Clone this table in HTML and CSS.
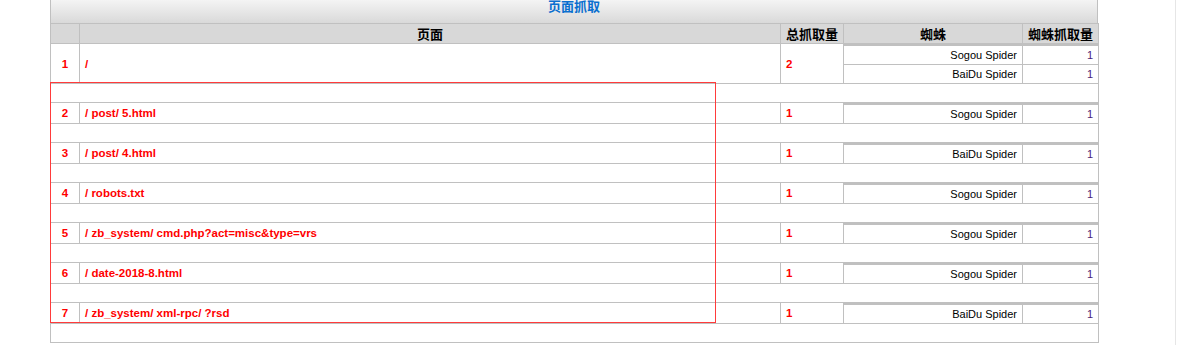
FILE: index.html
```html
<!DOCTYPE html>
<html lang="zh-CN">
<head>
  <meta charset="UTF-8">
  <title>页面抓取</title>
  <link rel="stylesheet" href="styles.css">
</head>
<body>
  <div class="page">
    <div class="panel">
      <div class="panel-title">页面抓取</div>
      <table class="crawl">
        <colgroup>
          <col class="c-no">
          <col class="c-url">
          <col class="c-total">
          <col class="c-spider">
          <col class="c-count">
        </colgroup>
        <thead>
          <tr>
            <th></th>
            <th>页面</th>
            <th>总抓取量</th>
            <th>蜘蛛</th>
            <th>蜘蛛抓取量</th>
          </tr>
        </thead>
        <tbody>
          <tr class="first">
            <td class="no" rowspan="2">1</td>
            <td class="url" rowspan="2">/</td>
            <td class="total" rowspan="2">2</td>
            <td class="spider">Sogou Spider</td>
            <td class="count"><a href="#">1</a></td>
          </tr>
          <tr class="sub">
            <td class="spider">BaiDu Spider</td>
            <td class="count"><a href="#">1</a></td>
          </tr>
          <tr class="gap"><td colspan="5"></td></tr>

          <tr class="first">
            <td class="no">2</td>
            <td class="url">/ post/ 5.html</td>
            <td class="total">1</td>
            <td class="spider">Sogou Spider</td>
            <td class="count"><a href="#">1</a></td>
          </tr>
          <tr class="gap"><td colspan="5"></td></tr>

          <tr class="first">
            <td class="no">3</td>
            <td class="url">/ post/ 4.html</td>
            <td class="total">1</td>
            <td class="spider">BaiDu Spider</td>
            <td class="count"><a href="#">1</a></td>
          </tr>
          <tr class="gap"><td colspan="5"></td></tr>

          <tr class="first">
            <td class="no">4</td>
            <td class="url">/ robots.txt</td>
            <td class="total">1</td>
            <td class="spider">Sogou Spider</td>
            <td class="count"><a href="#">1</a></td>
          </tr>
          <tr class="gap"><td colspan="5"></td></tr>

          <tr class="first">
            <td class="no">5</td>
            <td class="url">/ zb_system/ cmd.php?act=misc&amp;type=vrs</td>
            <td class="total">1</td>
            <td class="spider">Sogou Spider</td>
            <td class="count"><a href="#">1</a></td>
          </tr>
          <tr class="gap"><td colspan="5"></td></tr>

          <tr class="first">
            <td class="no">6</td>
            <td class="url">/ date-2018-8.html</td>
            <td class="total">1</td>
            <td class="spider">Sogou Spider</td>
            <td class="count"><a href="#">1</a></td>
          </tr>
          <tr class="gap"><td colspan="5"></td></tr>

          <tr class="first">
            <td class="no">7</td>
            <td class="url">/ zb_system/ xml-rpc/ ?rsd</td>
            <td class="total">1</td>
            <td class="spider">BaiDu Spider</td>
            <td class="count"><a href="#">1</a></td>
          </tr>
          <tr class="gap"><td colspan="5"></td></tr>
        </tbody>
      </table>
      <div class="mark"></div>
    </div>
  </div>
</body>
</html>
```

FILE: styles.css
```css
body {
  margin: 0;
  font-family: "Liberation Sans", Arial, sans-serif;
  font-size: 11px;
  color: #000;
  background: #fff;
}
.page {
  width: 1175px;
  min-height: 351px;
  border-right: 1px solid #e6e6e6;
}
.panel {
  position: relative;
  width: 1048px;
  margin: -6px 0 0 50px;
}
.panel-title {
  box-sizing: border-box;
  height: 29px;
  line-height: 24px;
  text-align: center;
  font-size: 13px;
  font-weight: bold;
  color: #0a6fcf;
  font-family: "Noto Sans CJK SC", "Liberation Sans", sans-serif;
  background: linear-gradient(#fbfbfb, #d9d9d9);
  border: 1px solid #c0c0c0;
  border-top: none;
  border-bottom: none;
}
.crawl {
  width: 1048px;
  border-collapse: collapse;
  table-layout: fixed;
}
.c-no { width: 29px; }
.c-url { width: 701px; }
.c-total { width: 63px; }
.c-spider { width: 179px; }
.c-count { width: 76px; }
.crawl th,
.crawl td {
  border: 1px solid #c0c0c0;
  padding: 0 5px;
  line-height: 12px;
  white-space: nowrap;
  overflow: hidden;
}
.crawl th {
  height: 19px;
  background: #d8d8d8;
  font-size: 13px;
  font-weight: bold;
  font-family: "Noto Sans CJK SC", "Liberation Sans", sans-serif;
  text-align: center;
}
.crawl th:nth-child(3) {
  text-align: left;
}
.crawl th:nth-child(5) {
  text-align: right;
}
.crawl tr.first td {
  height: 20px;
}
.crawl tr.sub td {
  height: 18px;
}
.crawl tr.gap td {
  height: 18px;
  padding: 0;
}
.crawl .no {
  text-align: center;
}
.crawl .no,
.crawl .url,
.crawl .total {
  color: #f00;
  font-weight: bold;
  font-size: 11.5px;
}
.crawl .spider,
.crawl .count {
  text-align: right;
}
/* thicker rule above each spider block */
.crawl tr.first .spider,
.crawl tr.first .count {
  height: 18px;
  padding-top: 2px;
  box-shadow: inset 0 2px 0 #c0c0c0;
}
.crawl .count a {
  color: #4a1a78;
  text-decoration: none;
}
.mark {
  position: absolute;
  left: 0;
  top: 88px;
  width: 666px;
  height: 241px;
  box-sizing: border-box;
  border: 1px solid #ff3b3b;
}
```
